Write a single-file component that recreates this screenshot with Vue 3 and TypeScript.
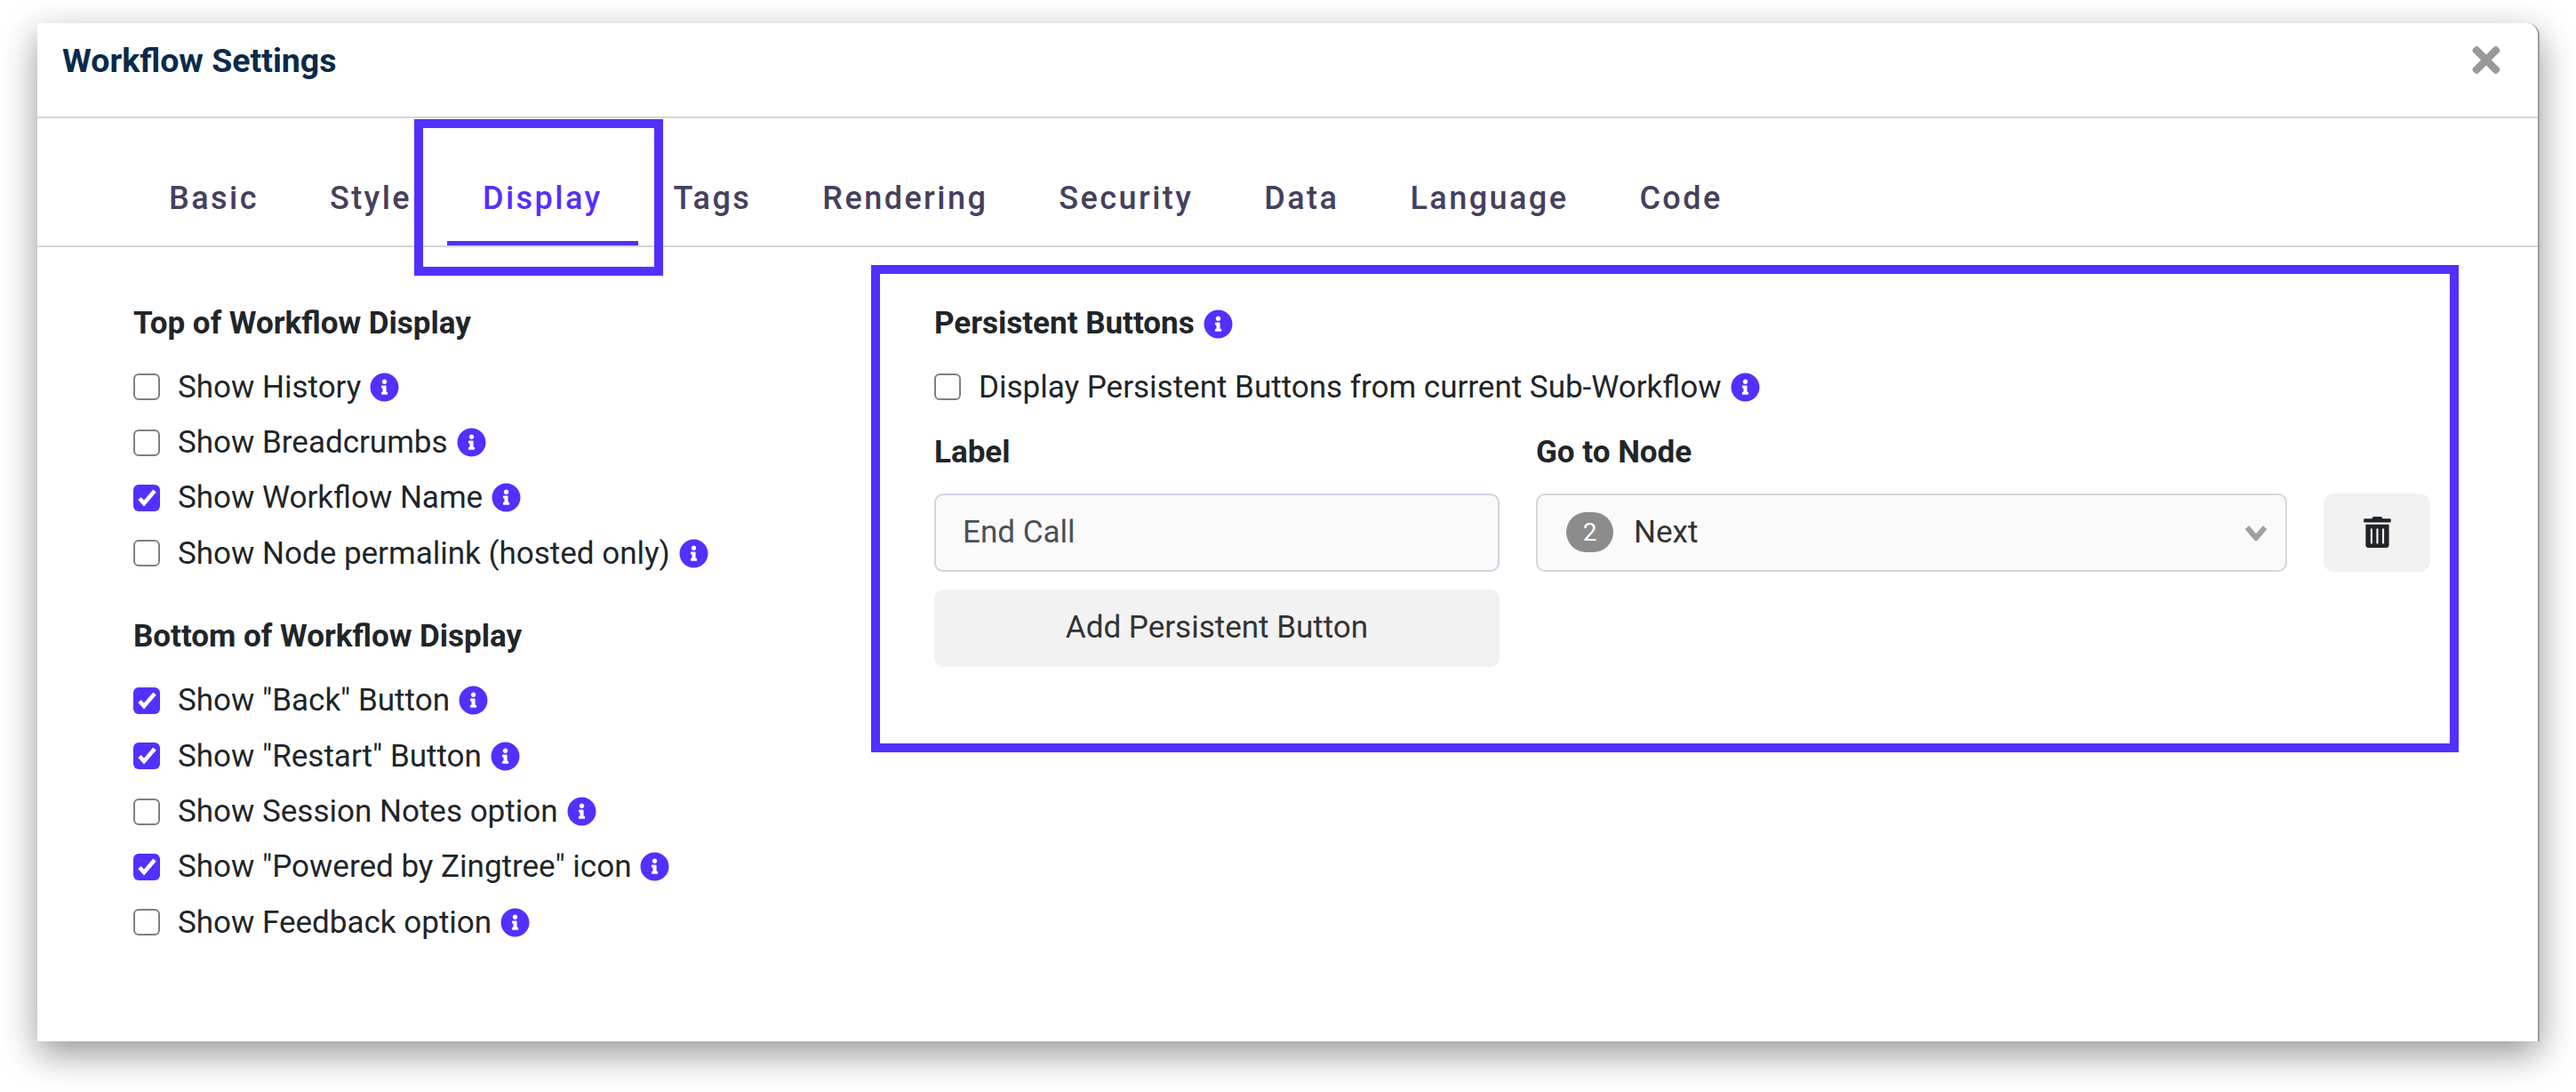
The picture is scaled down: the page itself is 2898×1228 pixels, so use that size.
<script setup lang="ts">
// Workflow settings modal, Display tab.
interface Option {
  label: string;
  checked: boolean;
}

const infoPath =
  "M256 8C119.043 8 8 119.083 8 256c0 136.997 111.043 248 248 248s248-111.003 248-248C504 119.083 392.957 8 256 8zm0 110c23.196 0 42 18.804 42 42s-18.804 42-42 42-42-18.804-42-42 18.804-42 42-42zm56 254c0 6.627-5.373 12-12 12h-88c-6.627 0-12-5.373-12-12v-24c0-6.627 5.373-12 12-12h12v-64h-12c-6.627 0-12-5.373-12-12v-24c0-6.627 5.373-12 12-12h64c6.627 0 12 5.373 12 12v100h12c6.627 0 12 5.373 12 12v24z";

const tabs = ["Basic", "Style", "Display", "Tags", "Rendering", "Security", "Data", "Language", "Code"];

const topOptions: Option[] = [
  { label: "Show History", checked: false },
  { label: "Show Breadcrumbs", checked: false },
  { label: "Show Workflow Name", checked: true },
  { label: "Show Node permalink (hosted only)", checked: false },
];

const bottomOptions: Option[] = [
  { label: 'Show "Back" Button', checked: true },
  { label: 'Show "Restart" Button', checked: true },
  { label: "Show Session Notes option", checked: false },
  { label: 'Show "Powered by Zingtree" icon', checked: true },
  { label: "Show Feedback option", checked: false },
];
</script>

<template>
  <div class="page">
    <section class="modal">
      <header class="modal-head">
        <h1>Workflow Settings</h1>
        <svg class="close" viewBox="0 80 352 352">
          <path d="M242.72 256l100.07-100.07c12.28-12.28 12.28-32.19 0-44.48l-22.24-22.24c-12.28-12.28-32.19-12.28-44.48 0L176 189.28 75.93 89.21c-12.28-12.28-32.19-12.28-44.48 0L9.21 111.45c-12.28 12.28-12.28 32.19 0 44.48L109.28 256 9.21 356.07c-12.28 12.28-12.28 32.19 0 44.48l22.24 22.24c12.28 12.28 32.2 12.28 44.48 0L176 322.72l100.07 100.07c12.28 12.28 32.2 12.28 44.48 0l22.24-22.24c12.28-12.28 12.28-32.19 0-44.48L242.72 256z" />
        </svg>
      </header>

      <nav class="tabs">
        <a v-for="tab in tabs" :key="tab" class="tab" :class="{ active: tab === 'Display' }">{{ tab }}</a>
      </nav>

      <div class="content">
        <div class="col-left">
          <h2>Top of Workflow Display</h2>
          <label v-for="opt in topOptions" :key="opt.label" class="check-row">
            <input type="checkbox" :checked="opt.checked" />
            <span>{{ opt.label }}</span>
            <svg class="info" viewBox="0 0 512 512"><path :d="infoPath" /></svg>
          </label>

          <h2 class="second">Bottom of Workflow Display</h2>
          <label v-for="opt in bottomOptions" :key="opt.label" class="check-row">
            <input type="checkbox" :checked="opt.checked" />
            <span>{{ opt.label }}</span>
            <svg class="info" viewBox="0 0 512 512"><path :d="infoPath" /></svg>
          </label>
        </div>

        <div class="col-right">
          <h2 class="with-info">
            Persistent Buttons
            <svg class="info" viewBox="0 0 512 512"><path :d="infoPath" /></svg>
          </h2>
          <label class="check-row">
            <input type="checkbox" />
            <span>Display Persistent Buttons from current Sub-Workflow</span>
            <svg class="info" viewBox="0 0 512 512"><path :d="infoPath" /></svg>
          </label>

          <div class="form-grid">
            <div class="field-label">Label</div>
            <div class="field-label">Go to Node</div>
            <div></div>

            <input class="text-input" type="text" value="End Call" />
            <div class="select">
              <span class="badge">2</span>
              <span class="select-text">Next</span>
              <svg class="chevron" viewBox="0 0 26 18">
                <path d="M3 3l10 12L23 3" />
              </svg>
            </div>
            <button class="trash" type="button">
              <svg viewBox="0 0 448 512">
                <path d="M32 464a48 48 0 0 0 48 48h288a48 48 0 0 0 48-48V128H32zm272-256a16 16 0 0 1 32 0v224a16 16 0 0 1-32 0zm-96 0a16 16 0 0 1 32 0v224a16 16 0 0 1-32 0zm-96 0a16 16 0 0 1 32 0v224a16 16 0 0 1-32 0zM432 32H312l-9.4-18.7A24 24 0 0 0 281.1 0H166.8a23.72 23.72 0 0 0-21.4 13.3L136 32H16A16 16 0 0 0 0 48v32a16 16 0 0 0 16 16h416a16 16 0 0 0 16-16V48a16 16 0 0 0-16-16z" />
              </svg>
            </button>

            <button class="add" type="button">Add Persistent Button</button>
          </div>
        </div>
      </div>

      <!-- annotation rectangles drawn over the screenshot -->
      <div class="mark mark-tab"></div>
      <div class="mark mark-panel"></div>
    </section>
  </div>
</template>

<style>
html,
body {
  margin: 0;
  background: #fff;
}
</style>

<style scoped>
.page {
  width: 2898px;
  height: 1228px;
  box-sizing: border-box;
  padding: 26px 41px 0 42px;
  overflow: hidden;
  font-family: Roboto, "Liberation Sans", sans-serif;
  color: #212529;
}

.modal {
  position: relative;
  height: 1145px;
  background: #fff;
  border-right: 2px solid #9c9c9c;
  border-top-right-radius: 14px;
  box-shadow: 0 14px 40px rgba(0, 0, 0, 0.42);
}

.modal-head {
  height: 107px;
  box-sizing: border-box;
  border-bottom: 2px solid #d6d6d6;
  padding: 0 42px 0 28px;
  display: flex;
  align-items: flex-start;
  justify-content: space-between;
}
.modal-head h1 {
  margin: 20px 0 0;
  font-size: 37.5px;
  line-height: 44px;
  font-weight: 700;
  color: #0b2a4a;
}
.close {
  width: 32px;
  height: 31px;
  margin-top: 26px;
  fill: #999;
}

.tabs {
  height: 145px;
  box-sizing: border-box;
  border-bottom: 2px solid #d6d6d6;
  padding-left: 108px;
  display: flex;
  align-items: stretch;
}
.tab {
  padding: 66px 40px 0;
  font-size: 36px;
  line-height: 48px;
  font-weight: 500;
  letter-spacing: 2.45px;
  color: #463f5e;
}
.tab.active {
  color: #5230ff;
  box-shadow: inset 0 -5px 0 #5230ff;
}

.content {
  display: flex;
  padding-left: 108px;
}
.col-left {
  width: 901px;
  padding-top: 62px;
}
.col-right {
  padding-top: 62px;
}

h2 {
  margin: 0 0 16px;
  font-size: 35px;
  line-height: 48px;
  font-weight: 700;
}
h2.second {
  margin: 38px 0 17px;
}
h2.with-info {
  display: flex;
  align-items: center;
  gap: 10px;
}

.check-row {
  height: 62.4px;
  display: flex;
  align-items: center;
  font-size: 35px;
}
.check-row input {
  appearance: none;
  width: 30px;
  height: 30px;
  margin: 0 20px 0 0;
  box-sizing: border-box;
  border: 2.5px solid #808080;
  border-radius: 6px;
  background: #fff;
}
.check-row input:checked {
  border: none;
  background: #5230ff url("data:image/svg+xml,%3Csvg xmlns='http://www.w3.org/2000/svg' viewBox='0 0 30 30'%3E%3Cpath d='M7 15.5l5 5.5L24 7' fill='none' stroke='%23fff' stroke-width='4.6'/%3E%3C/svg%3E") center / 100% no-repeat;
}

.info {
  width: 33px;
  height: 33px;
  margin-left: 10px;
  fill: #5230ff;
  flex-shrink: 0;
}
h2 .info {
  margin-left: 0;
}

.form-grid {
  display: grid;
  grid-template-columns: 636px 845px 120px;
  column-gap: 41px;
}
.field-label {
  font-size: 35px;
  font-weight: 700;
  line-height: 48px;
  margin-top: 19px;
  margin-bottom: 22px;
}
.text-input {
  height: 88px;
  box-sizing: border-box;
  border: 2px solid #ced4e0;
  border-radius: 10px;
  background: #fafafa;
  padding: 0 30px 2px;
  font: 35px Roboto, sans-serif;
  color: #495057;
  outline: none;
}
.select {
  height: 88px;
  box-sizing: border-box;
  border: 2px solid #d6d6d6;
  border-radius: 10px;
  background: #fafafa;
  padding: 0 20px 2px 32px;
  display: flex;
  align-items: center;
  font-size: 35px;
  color: #333;
}
.badge {
  width: 53px;
  height: 45px;
  border-radius: 23px;
  background: #8c8c8c;
  color: #fff;
  font-size: 28px;
  line-height: 45px;
  text-align: center;
  margin-right: 23px;
}
.select-text {
  flex: 1;
}
.chevron {
  width: 26px;
  height: 18px;
  margin-top: 2px;
  fill: none;
  stroke: #a0a0a0;
  stroke-width: 6;
}
.trash {
  height: 88px;
  border: none;
  border-radius: 12px;
  background: #f2f2f2;
  display: flex;
  align-items: center;
  justify-content: center;
  padding: 0 0 2px;
}
.trash svg {
  width: 31px;
  height: 35px;
  fill: #212529;
}
.add {
  grid-column: 1;
  height: 87px;
  margin-top: 20px;
  padding: 0 0 2px;
  border: none;
  border-radius: 10px;
  background: #f2f2f2;
  font: 35px Roboto, sans-serif;
  color: #333;
}

.mark {
  position: absolute;
  box-sizing: border-box;
  border: 10px solid #5230ff;
}
.mark-tab {
  left: 424px;
  top: 108px;
  width: 280px;
  height: 176px;
}
.mark-panel {
  left: 938px;
  top: 272px;
  width: 1786px;
  height: 548px;
}
</style>
